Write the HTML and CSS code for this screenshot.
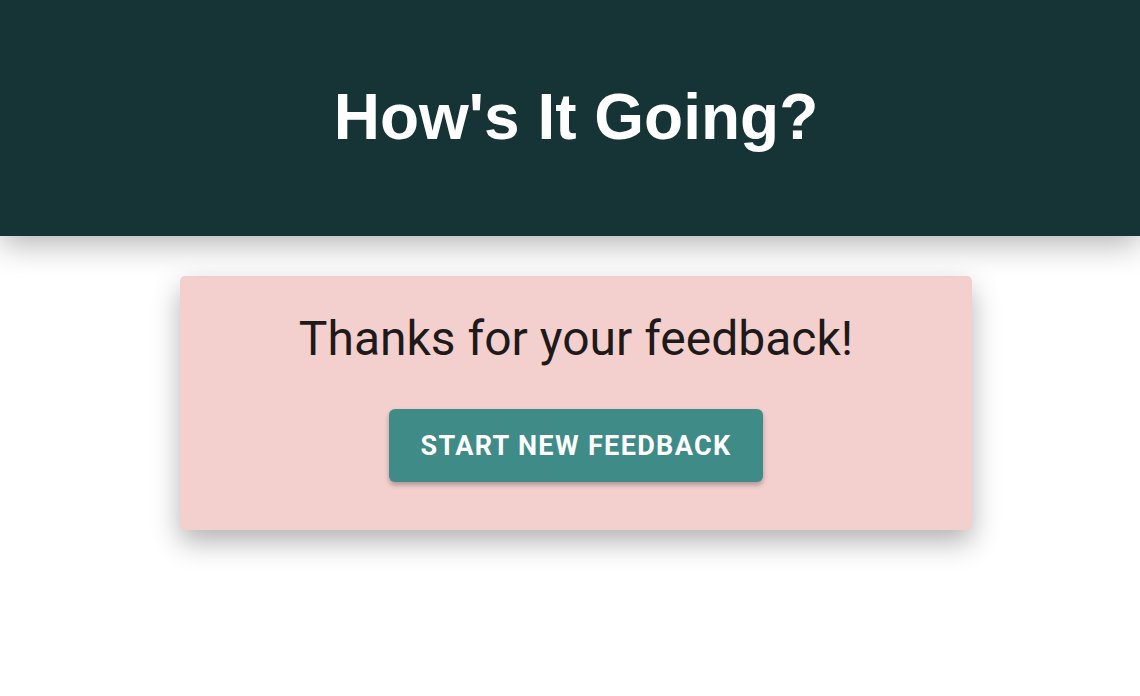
FILE: index.html
```html
<!DOCTYPE html>
<html>
<head>
<meta charset="utf-8">
<link rel="stylesheet" href="styles.css">
</head>
<body>
<header class="header">
  <h1 class="title">How's It Going?</h1>
</header>
<main class="main">
  <section class="card">
    <h2 class="thanks">Thanks for your feedback!</h2>
    <button class="btn">Start New Feedback</button>
  </section>
</main>
</body>
</html>
```
FILE: styles.css
```css
html, body {
  margin: 0;
  padding: 0;
  background: #ffffff;
}
body {
  font-family: Roboto, "Liberation Sans", sans-serif;
  min-height: 100vh;
}
.header {
  background: #163336;
  height: 236px;
  box-sizing: border-box;
  padding: 80px 0 0 12px;
  box-shadow: 0 8px 30px rgba(0, 0, 0, 0.3);
  position: relative;
  z-index: 1;
}
.title {
  margin: 0;
  text-align: center;
  color: #ffffff;
  font-family: "Liberation Sans", Arial, sans-serif;
  font-weight: 700;
  font-size: 64px;
  line-height: normal;
}
.main {
  padding: 40px 0 0 12px;
  display: flex;
  justify-content: center;
}
.card {
  width: 792px;
  box-sizing: border-box;
  background: #f3d0ce;
  border-radius: 5px;
  padding: 35px 0 48px;
  display: flex;
  flex-direction: column;
  align-items: center;
  box-shadow: 0 12px 28px rgba(0, 0, 0, 0.3);
}
.thanks {
  margin: 0 0 42px;
  font-family: Roboto, sans-serif;
  font-weight: 400;
  font-size: 48px;
  line-height: 56px;
  color: #1f1a1a;
}
.btn {
  width: 374px;
  height: 73px;
  border: none;
  border-radius: 6px;
  background: #3f8b88;
  color: #ffffff;
  font-family: Roboto, sans-serif;
  font-weight: 700;
  font-size: 27px;
  letter-spacing: 1.35px;
  text-transform: uppercase;
  box-shadow: 0 3px 5px rgba(0, 0, 0, 0.28);
  cursor: pointer;
}
```
